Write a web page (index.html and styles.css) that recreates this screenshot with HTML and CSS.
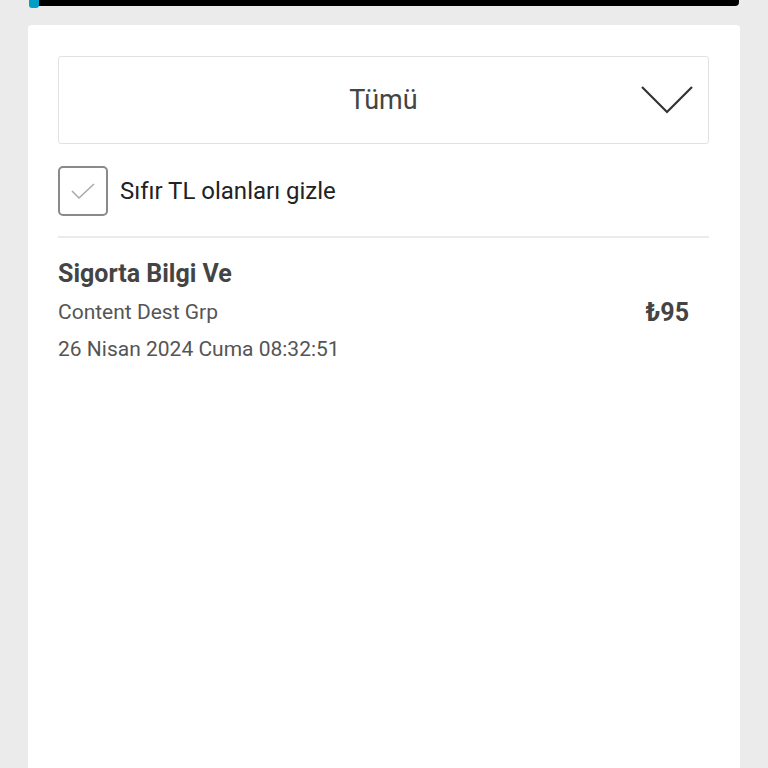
FILE: index.html
```html
<!DOCTYPE html>
<html lang="tr">
<head>
    <meta charset="UTF-8">
    <meta name="viewport" content="width=device-width, initial-scale=1.0">
    <title>Harcamalar</title>
    <link rel="stylesheet" href="styles.css">
</head>
<body>
    <div class="top-bar"><span class="top-bar-accent"></span></div>

    <div class="card">
        <div class="select-box">
            <span class="select-value">Tümü</span>
            <svg class="select-arrow" width="52" height="28" viewBox="0 0 52 28">
                <polyline points="1,1 26,26 51,1" fill="none" stroke="#333" stroke-width="2.2"/>
            </svg>
        </div>

        <label class="filter-row">
            <span class="check-box">
                <svg width="26" height="20" viewBox="0 0 26 20">
                    <polyline points="2,10 9,17 24,3" fill="none" stroke="#aaa" stroke-width="1.6"/>
                </svg>
            </span>
            <span class="filter-label">Sıfır TL olanları gizle</span>
        </label>

        <div class="divider"></div>

        <div class="charge-row">
            <div class="charge-info">
                <div class="charge-title">Sigorta Bilgi Ve</div>
                <div class="charge-sub">Content Dest Grp</div>
                <div class="charge-sub">26 Nisan 2024 Cuma 08:32:51</div>
            </div>
            <div class="charge-amount">₺95</div>
        </div>
    </div>
</body>
</html>
```

FILE: styles.css
```css
body {
    font-family: Roboto, "Liberation Sans", sans-serif;
    background-color: #ebebeb;
    color: #333;
    margin: 0;
    padding: 0;
}
.top-bar {
    margin: 0 29px 0 29px;
    height: 6px;
    background-color: #000;
    border-radius: 0 0 4px 4px;
    display: flex;
}
.top-bar-accent {
    width: 10px;
    height: 8px;
    background-color: #00a0c6;
    border-radius: 0 0 3px 3px;
}
.card {
    margin: 19px 28px 0 28px;
    min-height: 712px;
    background-color: #fff;
    border-radius: 4px 4px 0 0;
    padding: 31px 31px 0 30px;
}
.select-box {
    height: 86px;
    border: 1px solid #e2e2e2;
    border-radius: 3px;
    display: flex;
    align-items: center;
    justify-content: center;
    position: relative;
}
.select-value {
    font-size: 27px;
    color: #444;
}
.select-arrow {
    position: absolute;
    right: 15px;
    top: 29px;
}
.filter-row {
    display: flex;
    align-items: center;
    gap: 12px;
    margin-top: 22px;
}
.check-box {
    width: 46px;
    height: 46px;
    border: 2px solid #8a8a8a;
    border-radius: 5px;
    display: flex;
    align-items: center;
    justify-content: center;
}
.filter-label {
    font-size: 24px;
    color: #222;
}
.divider {
    height: 2px;
    background-color: #ebebeb;
    margin-top: 20px;
}
.charge-row {
    display: flex;
    align-items: center;
    justify-content: space-between;
    padding-top: 21px;
    padding-right: 20px;
}
.charge-title {
    font-size: 25px;
    line-height: 30px;
    font-weight: bold;
    color: #444;
    margin-bottom: 10px;
}
.charge-sub {
    font-size: 21px;
    line-height: 26px;
    color: #555;
    margin-bottom: 11px;
}
.charge-amount {
    font-size: 25px;
    font-weight: bold;
    color: #444;
    margin-top: -8px;
}
```
